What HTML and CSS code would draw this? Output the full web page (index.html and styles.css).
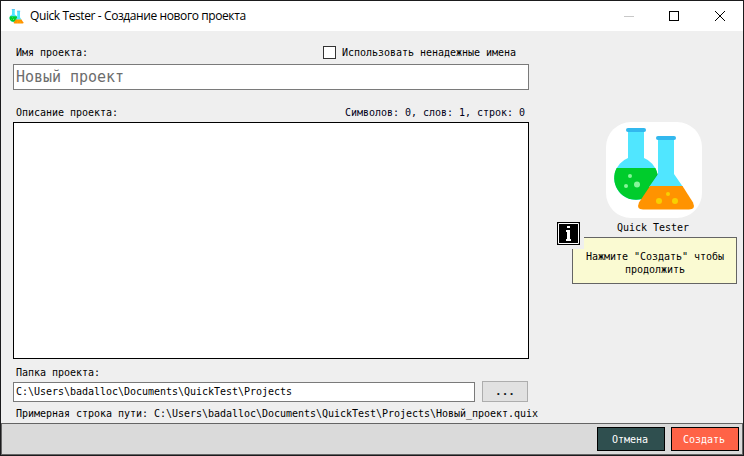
FILE: index.html
```html
<!DOCTYPE html>
<html lang="ru">
<head>
<meta charset="utf-8">
<title>Quick Tester - Создание нового проекта</title>
<link rel="stylesheet" href="styles.css">
</head>
<body>
<svg width="0" height="0" class="defs">
  <symbol id="flasks" viewBox="0 0 96 96">
    <path fill="#50e6ff" d="M22 9h16v27A21.800 21.800 0 1 1 22 36z"/>
    <path fill="#00cc2c" d="M10.600 46h38.800A21.800 21.800 0 1 1 10.600 46z"/>
    <path fill="#00ad25" d="M51.500 51.500l.3 4.500q-1 10-8.500 16l-7 4.500z"/>
    <rect x="20" y="6" width="20" height="4" rx="2" fill="#32b8ee"/>
    <path fill="#50e6ff" d="M52 17h16v35l9 13H43l9-13z"/>
    <path fill="#ff9300" d="M44 64h32.500L87 80.500q3 7-4 7H37q-7 0-4-7z"/>
    <rect x="50" y="14" width="20" height="4" rx="2" fill="#32b8ee"/>
    <g fill="#86f59a"><circle cx="24" cy="54" r="2"/><circle cx="20" cy="64" r="2"/><circle cx="31" cy="62.500" r="3"/></g>
    <g fill="#f8d000"><circle cx="62" cy="72" r="2"/><circle cx="53" cy="79" r="3"/><circle cx="69" cy="79" r="3"/></g>
  </symbol>
</svg>
<div class="window">
  <header class="titlebar">
    <svg class="app-icon" viewBox="6 4 84 86"><use href="#flasks" width="96" height="96"/></svg>
    <span class="title">Quick Tester - Создание нового проекта</span>
    <svg class="controls" viewBox="0 0 102 10" fill="none">
      <path d="M0 5.500h10" stroke="#c8c8c8"/>
      <rect x="45.500" y=".5" width="9" height="9" stroke="#000"/>
      <path d="M91 0l10 10M101 0l-10 10" stroke="#000"/>
    </svg>
  </header>
  <main class="content">
    <section class="form">
      <div class="row name-row">
        <span>Имя проекта:</span>
        <span class="check"><i class="box"></i>Использовать ненадежные имена</span>
      </div>
      <div class="field name-field">Новый проект</div>
      <div class="row desc-row">
        <span>Описание проекта:</span>
        <span class="counts">Символов: 0, слов: 1, строк: 0</span>
      </div>
      <div class="description"></div>
      <div class="row folder-row"><span>Папка проекта:</span></div>
      <div class="folder">
        <div class="field path-field">C:\Users\badalloc\Documents\QuickTest\Projects</div>
        <div class="browse">...</div>
      </div>
      <div class="row sample">Примерная строка пути: C:\Users\badalloc\Documents\QuickTest\Projects\Новый_проект.quix</div>
    </section>
    <aside class="side">
      <div class="logo"><svg viewBox="0 0 96 96"><use href="#flasks" width="96" height="96"/></svg></div>
      <div class="brand">Quick Tester</div>
      <div class="hint">
        <div class="info">
          <svg viewBox="0 0 23 23">
            <path d="M0 0h23v23H0z"/>
            <path d="M1.500 1.500h20v20h-20z" fill="none" stroke="#fff"/>
            <path fill="#fff" d="M10 4h3v2h-3zM9 8h4v9h1v2H9v-2h1v-7H9z"/>
          </svg>
        </div>
        Нажмите "Создать" чтобы<br>продолжить
      </div>
    </aside>
  </main>
  <footer class="footer">
    <div class="btn cancel">Отмена</div>
    <div class="btn create">Создать</div>
  </footer>
</div>
</body>
</html>
```
FILE: styles.css
```css
* { box-sizing: border-box; }
body {
  margin: 0;
  width: 744px;
  height: 456px;
  overflow: hidden;
  font: 10px/14px "DejaVu Sans Mono", monospace;
  letter-spacing: -0.02px;
  color: #000;
}
.defs { position: absolute; }
svg { display: block; }
.window {
  display: flex;
  flex-direction: column;
  height: 456px;
  border: 1px solid #1b1b1d;
  background: #efefef;
}
.titlebar {
  display: flex;
  align-items: center;
  height: 30px;
  flex: none;
  padding: 0 17px 0 8px;
  background: #fff;
}
.app-icon { width: 15px; height: 15px; }
.title {
  margin-left: 6px;
  font: 12px/16px "Open Sans", sans-serif;
  letter-spacing: -0.4px;
  white-space: nowrap;
}
.controls { width: 102px; height: 10px; margin: 0 0 0 auto; }
.content { display: flex; flex: 1; min-height: 0; }
.form { width: 516px; margin-left: 12px; }
.row {
  display: flex;
  justify-content: space-between;
  align-items: center;
  height: 14px;
  padding: 0 4px 0 3px;
  white-space: nowrap;
}
.name-row { height: 16px; margin-top: 14px; padding-right: 13px; }
.check { display: flex; align-items: center; }
.box {
  width: 13px;
  height: 13px;
  margin: 0 6px 1px 0;
  border: 1px solid #333;
  background: #fff;
}
.field {
  border: 1px solid #7a7a7a;
  background: #fff;
  padding-left: 2px;
  white-space: nowrap;
}
.name-field {
  height: 26px;
  margin-top: 3px;
  font-size: 15px;
  line-height: 24px;
  color: #6d6d6d;
}
.desc-row { margin-top: 16px; }
.counts { color: #000018; }
.description {
  height: 237px;
  margin-top: 2px;
  border: 1px solid #000;
  background: #fff;
}
.folder-row { margin-top: 7px; }
.folder { display: flex; align-items: flex-end; height: 21px; margin-top: 1px; }
.path-field { width: 462px; height: 20px; line-height: 18px; }
.browse {
  width: 46px;
  height: 21px;
  margin-left: 7px;
  border: 1px solid #adadad;
  background: #e1e1e1;
  color: #101820;
  font-size: 11px;
  font-weight: bold;
  line-height: 19px;
  text-align: center;
}
.sample { margin-top: 5px; }
.side { width: 165px; margin: 91px 0 0 43px; }
.logo {
  width: 96px;
  height: 96px;
  margin-left: 34px;
  border-radius: 25px;
  background: #fff;
}
.brand { margin-top: 3px; padding-right: 3px; text-align: center; }
.hint {
  position: relative;
  height: 47px;
  margin-top: 2px;
  padding: 12px 0 0 1px;
  border: 1px solid #646464;
  background: #fafad2;
  line-height: 13px;
  text-align: center;
}
.info {
  position: absolute;
  left: -19px;
  top: -19px;
  width: 30px;
  height: 30px;
  padding: 3px;
  background: #efefef;
}
.info svg { width: 23px; height: 23px; }
.footer {
  display: flex;
  justify-content: flex-end;
  gap: 6px;
  height: 32px;
  flex: none;
  padding: 3px 3px 0 0;
  border: 1px solid #646464;
  background: #dadada;
}
.btn {
  width: 68px;
  height: 24px;
  padding-right: 2px;
  border: 1px solid #000;
  color: #fff;
  line-height: 23px;
  text-align: center;
}
.cancel { background: #2f4f4f; }
.create { background: #ff6347; }
```
